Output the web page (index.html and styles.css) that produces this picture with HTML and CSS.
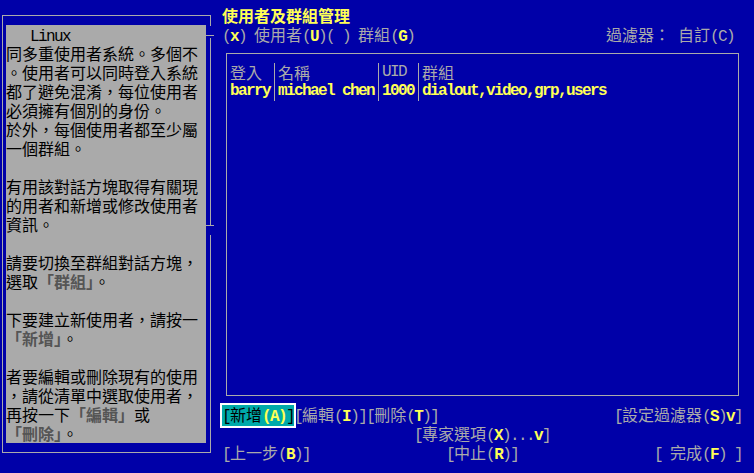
FILE: index.html
```html
<!DOCTYPE html>
<html lang="zh-Hant">
<head>
<meta charset="utf-8">
<title>使用者及群組管理</title>
<link rel="stylesheet" href="styles.css">
</head>
<body>
<div class="screen">
  <aside class="side">
    <div class="frame">
      <div class="panel">
        <div class="ln"><span class="lat">Linux</span></div>
        <div class="ln">同多重使用者系統。多個不</div>
        <div class="ln">。使用者可以同時登入系統</div>
        <div class="ln">都了避免混淆，每位使用者</div>
        <div class="ln">必須擁有個別的身份。</div>
        <div class="ln">於外，每個使用者都至少屬</div>
        <div class="ln">一個群組。</div>
        <div class="ln"></div>
        <div class="ln">有用該對話方塊取得有關現</div>
        <div class="ln">的用者和新增或修改使用者</div>
        <div class="ln">資訊。</div>
        <div class="ln"></div>
        <div class="ln">請要切換至群組對話方塊，</div>
        <div class="ln">選取<span class="em">「群組」</span>。</div>
        <div class="ln"></div>
        <div class="ln">下要建立新使用者，請按一</div>
        <div class="ln"><span class="em">「新增」</span>。</div>
        <div class="ln"></div>
        <div class="ln">者要編輯或刪除現有的使用</div>
        <div class="ln">，請從清單中選取使用者，</div>
        <div class="ln">再按一下<span class="em">「編輯」</span>或</div>
        <div class="ln"><span class="em">「刪除」</span>。</div>
      </div>
      <svg class="scroll" width="8" height="438" viewBox="0 0 8 438">
        <g stroke="#aaaaaa" stroke-width="1" shape-rendering="crispEdges">
          <line x1="4.5" y1="0" x2="4.5" y2="11"/>
          <line x1="0" y1="20.5" x2="8" y2="20.5"/>
          <line x1="4.5" y1="23" x2="4.5" y2="211"/>
          <line x1="0" y1="210.5" x2="8" y2="210.5"/>
          <line x1="4.5" y1="220" x2="4.5" y2="438"/>
        </g>
      </svg>
    </div>
  </aside>
  <main class="main">
    <div class="row title"><span class="z">使用者及群組管理</span></div>
    <div class="row opts">
      <span>(<b class="k">x</b>) <span class="z">使用者</span>(<b class="k">U</b>)( ) <span class="z">群組</span>(<b class="k">G</b>)</span>
      <span class="push"><span class="z">過濾器：</span> <span class="z">自訂</span>(C)</span>
    </div>
    <div class="list">
      <div class="tbl">
        <span class="z">登入</span><span class="sep"></span><span class="z">名稱</span><span class="sep"></span><span>UID</span><span class="sep"></span><span class="z">群組</span>
        <b class="k">barry</b><span class="sep"></span><b class="k">michael chen</b><span class="sep"></span><b class="k">1000</b><span class="sep"></span><b class="k">dialout,video,grp,users</b>
      </div>
    </div>
    <div class="row btns">
      <span class="focus">[<span class="z">新增</span><span class="k">(A)</span>]</span>
      <span>[<span class="z">編輯</span>(<b class="k">I</b>)]</span>
      <span>[<span class="z">刪除</span>(<b class="k">T</b>)]</span>
      <span class="push">[<span class="z">設定過濾器</span>(<b class="k">S</b>)<b class="k">v</b>]</span>
    </div>
    <div class="row expert">
      <span>[<span class="z">專家選項</span>(<b class="k">X</b>)...<b class="k">v</b>]</span>
    </div>
    <div class="row nav">
      <span>[<span class="z">上一步</span>(<b class="k">B</b>)]</span>
      <span class="abort">[<span class="z">中止</span>(<b class="k">R</b>)]</span>
      <span class="push">[ <span class="z">完成</span>(<b class="k">F</b>) ]</span>
    </div>
  </main>
</div>
</body>
</html>
```
FILE: styles.css
```css
* {
  box-sizing: border-box;
  margin: 0;
  padding: 0;
}

html,
body {
  width: 754px;
  height: 473px;
  overflow: hidden;
  background: #0000a8;
}

body {
  font-family: "Liberation Mono", "Noto Sans CJK TC", monospace;
  font-size: 16px;
  letter-spacing: -1.6px;
  line-height: 19px;
  color: #aaaaaa;
}

b {
  font-weight: 700;
}

.screen {
  display: flex;
  height: 473px;
}

/* left help panel */
.side {
  width: 214px;
  flex: none;
}

.frame {
  position: relative;
  margin: 15px 0 0 2px;
  width: 209px;
  height: 438px;
  border: 1px solid #aaaaaa;
  border-right: none;
}

.panel {
  margin: 9px 0 0 3px;
  width: 200px;
  height: 418px;
  background: #aaaaaa;
  color: #000;
  font-family: "Noto Sans CJK TC", sans-serif;
  font-size: 16px;
  letter-spacing: 0;
}

.ln {
  height: 19px;
  line-height: 19px;
  white-space: pre;
}

.lat {
  font-family: "Liberation Mono", monospace;
  letter-spacing: -1.6px;
  padding-left: 24px;
}

.em {
  color: #555555;
  font-weight: 700;
}

.scroll {
  position: absolute;
  left: 203px;
  top: -1px;
}

/* main area */
.main {
  flex: 1;
  padding-top: 6px;
}

.row {
  display: flex;
  align-items: baseline;
  height: 19px;
  line-height: 19px;
  white-space: pre;
  padding-left: 8px;
}

.z {
  font-family: "Noto Sans CJK TC", sans-serif;
  letter-spacing: 0;
}

.k {
  color: #ffff55;
  font-weight: 700;
}

.title {
  color: #ffff55;
  font-weight: 700;
}

.opts {
  padding-right: 20px;
}

.push {
  margin-left: auto;
}

.list {
  margin: 9px 0 0 12px;
  width: 513px;
  height: 343px;
  border: 1px solid #aaaaaa;
  padding: 9px 0 0 3px;
}

.tbl {
  display: grid;
  grid-template-columns: 40px 8px 96px 8px 32px 8px auto;
  grid-auto-rows: 19px;
  line-height: 19px;
  white-space: pre;
}

.sep {
  background: linear-gradient(#aaaaaa, #aaaaaa) 4px 0 / 1px 100% no-repeat;
}

.btns {
  margin-top: 9px;
  padding-right: 12px;
}

.focus {
  display: inline-block;
  height: 21px;
  background: #00aaaa;
  color: #000;
  box-shadow: 0 0 0 2px #ffffff;
}

.expert {
  padding-left: 200px;
}

.nav {
  padding-right: 12px;
}

.abort {
  margin-left: 136px;
}
```
